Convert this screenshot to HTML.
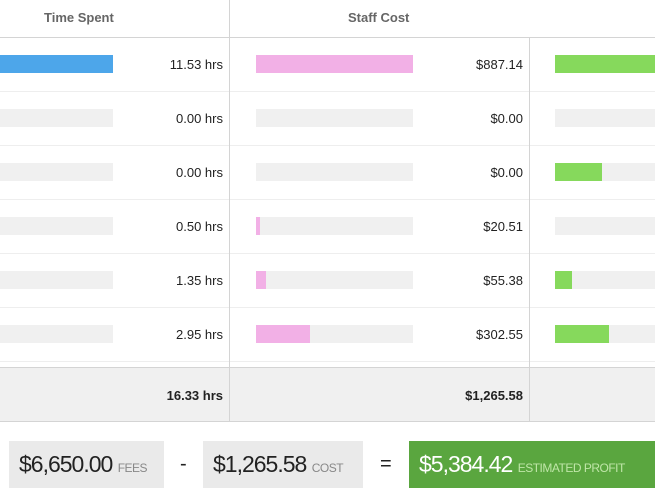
<!DOCTYPE html>
<html><head><style>
*{margin:0;padding:0;box-sizing:border-box}
body{width:655px;height:494px;background:#fff;font-family:"Liberation Sans",sans-serif;position:relative;overflow:hidden;color:#222}
.a{position:absolute}
.h{font-size:13px;color:#666;font-weight:bold;top:10px}
.v{background:#d4d4d4;width:1px}
.hl{background:#eee;height:1px;left:0;width:655px}
.bg{background:#f0f0f0;height:18px}
.t{font-size:13px;text-align:right;width:120px}
.box{top:441px;height:47px;background:#eaeaea;font-size:23px;line-height:47px;padding-left:10px;white-space:nowrap;letter-spacing:-1px}
.box small{font-size:12px;color:#888;letter-spacing:-0.5px}
</style></head><body>
<div class="a h" style="left:44px">Time Spent</div>
<div class="a h" style="left:348px">Staff Cost</div>
<div class="a" style="left:0;top:37px;width:655px;height:1px;background:#d4d4d4"></div>
<div class="a hl" style="top:91px"></div>
<div class="a hl" style="top:145px"></div>
<div class="a hl" style="top:199px"></div>
<div class="a hl" style="top:253px"></div>
<div class="a hl" style="top:307px"></div>
<div class="a hl" style="top:361px"></div>
<div class="a" style="left:0;top:367px;width:655px;height:55px;background:#f0f0f0;border-top:1px solid #d4d4d4;border-bottom:1px solid #d4d4d4"></div>
<div class="a v" style="left:229px;top:0;height:422px"></div>
<div class="a v" style="left:529px;top:37px;height:385px"></div>

<div class="a bg" style="left:0;width:113px;top:55px;background:#4da6ea"></div>
<div class="a bg" style="left:256px;width:157px;top:55px;background:#f2b0e6"></div>
<div class="a bg" style="left:555px;width:100px;top:55px;background:#86d95c"></div>

<div class="a bg" style="left:0;width:113px;top:109px"></div>
<div class="a bg" style="left:256px;width:157px;top:109px"></div>
<div class="a bg" style="left:555px;width:100px;top:109px"></div>

<div class="a bg" style="left:0;width:113px;top:163px"></div>
<div class="a bg" style="left:256px;width:157px;top:163px"></div>
<div class="a bg" style="left:555px;width:100px;top:163px"></div>
<div class="a bg" style="left:555px;width:47px;top:163px;background:#86d95c"></div>

<div class="a bg" style="left:0;width:113px;top:217px"></div>
<div class="a bg" style="left:256px;width:157px;top:217px"></div>
<div class="a bg" style="left:256px;width:4px;top:217px;background:#f2b0e6"></div>
<div class="a bg" style="left:555px;width:100px;top:217px"></div>

<div class="a bg" style="left:0;width:113px;top:271px"></div>
<div class="a bg" style="left:256px;width:157px;top:271px"></div>
<div class="a bg" style="left:256px;width:10px;top:271px;background:#f2b0e6"></div>
<div class="a bg" style="left:555px;width:100px;top:271px"></div>
<div class="a bg" style="left:555px;width:17px;top:271px;background:#86d95c"></div>

<div class="a bg" style="left:0;width:113px;top:325px"></div>
<div class="a bg" style="left:256px;width:157px;top:325px"></div>
<div class="a bg" style="left:256px;width:54px;top:325px;background:#f2b0e6"></div>
<div class="a bg" style="left:555px;width:100px;top:325px"></div>
<div class="a bg" style="left:555px;width:54px;top:325px;background:#86d95c"></div>

<div class="a t" style="left:103px;top:57px">11.53 hrs</div>
<div class="a t" style="left:403px;top:57px">$887.14</div>
<div class="a t" style="left:103px;top:111px">0.00 hrs</div>
<div class="a t" style="left:403px;top:111px">$0.00</div>
<div class="a t" style="left:103px;top:165px">0.00 hrs</div>
<div class="a t" style="left:403px;top:165px">$0.00</div>
<div class="a t" style="left:103px;top:219px">0.50 hrs</div>
<div class="a t" style="left:403px;top:219px">$20.51</div>
<div class="a t" style="left:103px;top:273px">1.35 hrs</div>
<div class="a t" style="left:403px;top:273px">$55.38</div>
<div class="a t" style="left:103px;top:327px">2.95 hrs</div>
<div class="a t" style="left:403px;top:327px">$302.55</div>
<div class="a t" style="left:103px;top:388px;font-weight:bold">16.33 hrs</div>
<div class="a t" style="left:403px;top:388px;font-weight:bold">$1,265.58</div>

<div class="a box" style="left:9px;width:155px">$6,650.00 <small>FEES</small></div>
<div class="a" style="left:180px;top:453px;font-size:20px">-</div>
<div class="a box" style="left:203px;width:160px">$1,265.58 <small>COST</small></div>
<div class="a" style="left:380px;top:453px;font-size:20px">=</div>
<div class="a box" style="left:409px;width:246px;background:#5aa63f;color:#fff">$5,384.42 <small style="color:#bfe6a8">ESTIMATED PROFIT</small></div>
</body></html>
